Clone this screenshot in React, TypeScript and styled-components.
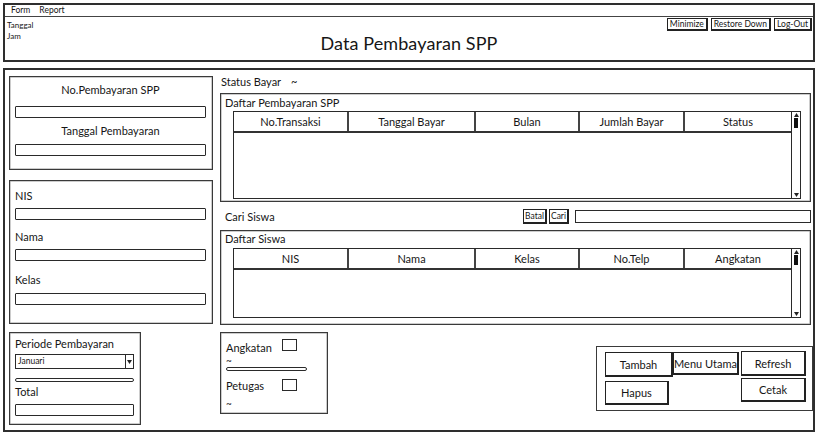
import React from 'react';
import styled, { createGlobalStyle } from 'styled-components';

const Global = createGlobalStyle`
  html, body { margin: 0; padding: 0; background: #fff; }
  body { font-family: Lato, "Open Sans", sans-serif; color: #161616; }
  * { box-sizing: border-box; }
`;

const Page = styled.div`
  width: 818px;
  height: 432px;
  padding: 3px 3px 0 3px;
  display: flex;
  flex-direction: column;
  gap: 6px;
  overflow: hidden;
`;

const TopWindow = styled.div`
  height: 59px;
  border: 2px solid #2e2e2e;
  display: flex;
  flex-direction: column;
`;

const MenuBar = styled.div`
  height: 12px;
  border-bottom: 1px solid #444;
  display: flex;
  gap: 9px;
  padding-left: 6px;
  font-size: 8.5px;
  line-height: 11px;
`;

const Header = styled.div`
  flex: 1;
  display: grid;
  grid-template-columns: 1fr auto 1fr;
`;

const InfoCol = styled.div`
  padding: 3px 0 0 2px;
  font-size: 8px;
  line-height: 10px;
  display: flex;
  flex-direction: column;
  gap: 1px;
`;

const Title = styled.div`
  font-size: 18px;
  line-height: 22px;
  padding-top: 15px;
  letter-spacing: 0.1px;
`;

const WinButtons = styled.div`
  justify-self: end;
  display: flex;
  gap: 3px;
  padding: 1px 1px 0 0;
  align-items: flex-start;
`;

const WinButton = styled.div`
  font-size: 8.5px;
  line-height: 10px;
  padding: 0 2px;
  border: 1px solid #222;
  border-right-width: 2px;
  border-bottom-width: 2px;
  background: #fff;
`;

const Main = styled.div`
  height: 364px;
  border: 2px solid #2e2e2e;
  padding: 6px 0 0 4px;
  display: flex;
  gap: 7px;
`;

const LeftCol = styled.div`
  width: 204px;
  display: flex;
  flex-direction: column;
`;

const Panel = styled.div<{ $w?: number; $h: number; $mt?: number }>`
  width: ${p => (p.$w ? `${p.$w}px` : '100%')};
  height: ${p => p.$h}px;
  margin-top: ${p => p.$mt ?? 0}px;
  border: 1px solid #3a3a3a;
  box-shadow: inset 0 0 0 0.5px #999;
  display: flex;
  flex-direction: column;
  flex-shrink: 0;
`;

const FormBody = styled.div<{ $pt: number }>`
  padding: ${p => p.$pt}px 6px 0 5px;
  display: flex;
  flex-direction: column;
`;

const Label = styled.div<{ $center?: boolean; $mt?: number; $size?: number }>`
  font-size: ${p => p.$size ?? 11}px;
  line-height: 14px;
  text-align: ${p => (p.$center ? 'center' : 'left')};
  margin-top: ${p => p.$mt ?? 0}px;
`;

const Input = styled.div<{ $mt: number; $h?: number }>`
  height: ${p => p.$h ?? 12}px;
  margin-top: ${p => p.$mt}px;
  border: 1px solid #2a2a2a;
  border-radius: 1px;
  background: #fff;
`;

const Select = styled.div`
  height: 15px;
  margin-top: 3px;
  border: 1px solid #2a2a2a;
  display: flex;
  font-size: 8.5px;
  line-height: 13px;
`;

const SelectText = styled.div`
  flex: 1;
  padding-left: 2px;
`;

const SelectArrow = styled.div`
  width: 8px;
  border-left: 1px solid #2a2a2a;
  display: flex;
  align-items: center;
  justify-content: center;
`;

const Slider = styled.div<{ $w?: number; $mt: number }>`
  width: ${p => (p.$w ? `${p.$w}px` : '100%')};
  height: 4px;
  margin-top: ${p => p.$mt}px;
  border: 1px solid #2a2a2a;
  border-radius: 2px;
`;

const RightCol = styled.div`
  width: 591px;
  display: flex;
  flex-direction: column;
`;

const StatusRow = styled.div`
  font-size: 11px;
  line-height: 12px;
  padding-left: 1px;
  display: flex;
  gap: 10px;
`;

const PanelTitle = styled.div<{ $pt: number }>`
  font-size: 11px;
  line-height: 12px;
  padding: ${p => p.$pt}px 0 0 4px;
`;

const Table = styled.div<{ $h: number; $mt: number }>`
  height: ${p => p.$h}px;
  margin: ${p => p.$mt}px 9px 0 12px;
  border: 1px solid #2a2a2a;
  display: flex;
`;

const TableMain = styled.div`
  flex: 1;
  display: flex;
  flex-direction: column;
`;

const HeaderRow = styled.div`
  height: 21px;
  display: flex;
  border-bottom: 2px solid #333;
`;

const HeadCell = styled.div<{ $w: number }>`
  width: ${p => p.$w}px;
  flex-shrink: 0;
  text-align: center;
  font-size: 11px;
  line-height: 19px;
  border-right: 2px solid #444;
  &:last-child { border-right: none; }
`;

const Scroll = styled.div`
  width: 9px;
  border-left: 1px solid #2a2a2a;
  display: flex;
  flex-direction: column;
  align-items: center;
  padding: 1px 0;
`;

const Thumb = styled.div`
  width: 4px;
  height: 10px;
  background: #111;
  margin-top: 1px;
`;

const ScrollSpacer = styled.div`
  flex: 1;
`;

const SearchRow = styled.div`
  height: 16px;
  margin-top: 6px;
  display: flex;
  align-items: center;
`;

const SearchLabel = styled.div`
  flex: 1;
  font-size: 11px;
  padding-left: 5px;
`;

const SmallButton = styled.div`
  font-size: 8.5px;
  line-height: 12px;
  padding: 0 1px;
  margin-right: 2px;
  border: 1px solid #222;
  border-right-width: 2px;
  border-bottom-width: 2px;
`;

const SearchInput = styled.div`
  width: 236px;
  height: 13px;
  margin-left: 4px;
  border: 1px solid #2a2a2a;
`;

const BottomRow = styled.div`
  margin-top: 7px;
  margin-right: -2px;
  display: flex;
  justify-content: space-between;
  align-items: flex-start;
`;

const FilterBody = styled.div`
  padding: 6px 0 0 5px;
  display: grid;
  grid-template-columns: 56px 15px;
  align-items: start;
`;

const Check = styled.div<{ $mt?: number }>`
  width: 15px;
  height: 12px;
  margin-top: ${p => p.$mt ?? 0}px;
  border: 1px solid #2a2a2a;
`;

const Tilde = styled.div<{ $mt?: number }>`
  grid-column: 1 / span 2;
  font-size: 10px;
  line-height: 8px;
  margin-top: ${p => p.$mt ?? 0}px;
`;

const ButtonPanel = styled.div`
  width: 217px;
  height: 65px;
  margin-top: 14px;
  border: 1px solid #3a3a3a;
  padding: 5px 0 0 8px;
  display: grid;
  grid-template-columns: 68px 68px 65px;
  grid-template-rows: 26px 25px;
  row-gap: 3px;
  column-gap: 0px;
`;

const ActionButton = styled.div<{ $col: number; $row: number; $w?: number; $h?: number; $dy?: number }>`
  grid-column: ${p => p.$col};
  grid-row: ${p => p.$row};
  width: ${p => (p.$w ? `${p.$w}px` : '100%')};
  height: ${p => p.$h ?? 25}px;
  margin-top: ${p => p.$dy ?? 0}px;
  border: 1px solid #222;
  border-right-width: 2px;
  border-bottom-width: 2px;
  font-size: 11px;
  display: flex;
  align-items: center;
  justify-content: center;
  background: #fff;
`;

const Arrow = ({ down }: { down?: boolean }) => (
  <svg width="5" height="4" viewBox="0 0 5 4">
    <path d={down ? 'M0 0 L5 0 L2.5 4 Z' : 'M0 4 L5 4 L2.5 0 Z'} fill="#222" />
  </svg>
);

const payCols: [string, number][] = [
  ['No.Transaksi', 115],
  ['Tanggal Bayar', 127],
  ['Bulan', 104],
  ['Jumlah Bayar', 105],
  ['Status', 106],
];

const siswaCols: [string, number][] = [
  ['NIS', 115],
  ['Nama', 127],
  ['Kelas', 104],
  ['No.Telp', 105],
  ['Angkatan', 106],
];

const DataTable = ({ cols, h, mt }: { cols: [string, number][]; h: number; mt: number }) => (
  <Table $h={h} $mt={mt}>
    <TableMain>
      <HeaderRow>
        {cols.map(([t, w]) => (
          <HeadCell key={t} $w={w}>{t}</HeadCell>
        ))}
      </HeaderRow>
    </TableMain>
    <Scroll>
      <Arrow />
      <Thumb />
      <ScrollSpacer />
      <Arrow down />
    </Scroll>
  </Table>
);

export default function App() {
  return (
    <>
      <Global />
      <Page>
        <TopWindow>
          <MenuBar>
            <span>Form</span>
            <span>Report</span>
          </MenuBar>
          <Header>
            <InfoCol>
              <span>Tanggal</span>
              <span>Jam</span>
            </InfoCol>
            <Title>Data Pembayaran SPP</Title>
            <WinButtons>
              <WinButton>Minimize</WinButton>
              <WinButton>Restore Down</WinButton>
              <WinButton>Log-Out</WinButton>
            </WinButtons>
          </Header>
        </TopWindow>

        <Main>
          <LeftCol>
            <Panel $h={94}>
              <FormBody $pt={6}>
                <Label $center>No.Pembayaran SPP</Label>
                <Input $mt={9} />
                <Label $center $mt={6}>Tanggal Pembayaran</Label>
                <Input $mt={6} />
              </FormBody>
            </Panel>
            <Panel $h={144} $mt={10}>
              <FormBody $pt={8}>
                <Label>NIS</Label>
                <Input $mt={5} />
                <Label $mt={10}>Nama</Label>
                <Input $mt={5} />
                <Label $mt={12}>Kelas</Label>
                <Input $mt={6} />
              </FormBody>
            </Panel>
            <Panel $w={132} $h={93} $mt={8}>
              <FormBody $pt={4}>
                <Label>Periode Pembayaran</Label>
                <Select>
                  <SelectText>Januari</SelectText>
                  <SelectArrow><Arrow down /></SelectArrow>
                </Select>
                <Slider $mt={9} />
                <Label $mt={3}>Total</Label>
                <Input $mt={5} />
              </FormBody>
            </Panel>
          </LeftCol>

          <RightCol>
            <StatusRow>
              <span>Status Bayar</span>
              <span>~</span>
            </StatusRow>
            <Panel $h={109} $mt={5}>
              <PanelTitle $pt={3}>Daftar Pembayaran SPP</PanelTitle>
              <DataTable cols={payCols} h={88} mt={2} />
            </Panel>
            <SearchRow>
              <SearchLabel>Cari Siswa</SearchLabel>
              <SmallButton>Batal</SmallButton>
              <SmallButton>Cari</SmallButton>
              <SearchInput />
            </SearchRow>
            <Panel $h={95} $mt={6}>
              <PanelTitle $pt={2}>Daftar Siswa</PanelTitle>
              <DataTable cols={siswaCols} h={70} mt={3} />
            </Panel>
            <BottomRow>
              <Panel $w={108} $h={82}>
                <FilterBody>
                  <Label $mt={2}>Angkatan</Label>
                  <Check />
                  <Tilde $mt={1}>~</Tilde>
                  <Slider $w={81} $mt={3} />
                  <span />
                  <Label $mt={8}>Petugas</Label>
                  <Check $mt={8} />
                  <Tilde $mt={6}>~</Tilde>
                </FilterBody>
              </Panel>
              <ButtonPanel>
                <ActionButton $col={1} $row={1}>Tambah</ActionButton>
                <ActionButton $col={2} $row={1} $w={66} $h={23}>Menu Utama</ActionButton>
                <ActionButton $col={3} $row={1} $dy={-1}>Refresh</ActionButton>
                <ActionButton $col={1} $row={2} $w={64} $h={24}>Hapus</ActionButton>
                <ActionButton $col={3} $row={2} $dy={-3} $h={24}>Cetak</ActionButton>
              </ButtonPanel>
            </BottomRow>
          </RightCol>
        </Main>
      </Page>
    </>
  );
}
